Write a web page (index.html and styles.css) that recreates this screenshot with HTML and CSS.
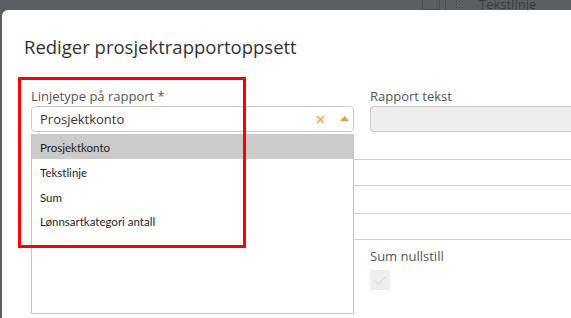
FILE: index.html
```html
<!DOCTYPE html>
<html lang="no">
<head>
    <meta charset="UTF-8">
    <title>Rediger prosjektrapportoppsett</title>
    <link rel="stylesheet" href="styles.css">
</head>
<body>
    <div class="backdrop">
        <div class="back-cell"></div>
        <div class="back-sep"></div>
        <div class="back-grip">
            <svg width="7" height="7" viewBox="0 0 7 7">
                <g fill="#45484b">
                    <rect x="0" y="0" width="1" height="1"/><rect x="3" y="0" width="1" height="1"/><rect x="6" y="0" width="1" height="1"/>
                    <rect x="0" y="3" width="1" height="1"/><rect x="3" y="3" width="1" height="1"/><rect x="6" y="3" width="1" height="1"/>
                    <rect x="0" y="6" width="1" height="1"/><rect x="3" y="6" width="1" height="1"/><rect x="6" y="6" width="1" height="1"/>
                </g>
            </svg>
        </div>
        <div class="back-text">Tekstlinje</div>
    </div>

    <div class="modal">
        <h1 class="modal-title">Rediger prosjektrapportoppsett</h1>

        <div class="form">
            <div class="row">
                <div class="field field-select">
                    <label class="field-label">Linjetype på rapport *</label>
                    <div class="select">
                        <span class="select-value">Prosjektkonto</span>
                        <span class="select-clear">
                            <svg width="9" height="9" viewBox="0 0 9 9">
                                <path d="M1 1 L8 8 M8 1 L1 8" stroke="#f39c3c" stroke-width="1.4" fill="none"/>
                            </svg>
                        </span>
                        <span class="select-arrow">
                            <svg width="9" height="5" viewBox="0 0 9 5">
                                <path d="M0 5 L4.5 0 L9 5 Z" fill="#f39c3c"/>
                            </svg>
                        </span>
                    </div>
                    <ul class="dropdown">
                        <li class="dropdown-item active">Prosjektkonto</li>
                        <li class="dropdown-item">Tekstlinje</li>
                        <li class="dropdown-item">Sum</li>
                        <li class="dropdown-item">Lønnsartkategori antall</li>
                    </ul>
                </div>
                <div class="field field-text">
                    <label class="field-label">Rapport tekst</label>
                    <div class="input disabled"></div>
                </div>
            </div>

            <div class="rules">
                <div class="rule r1"></div>
                <div class="rule r2"></div>
                <div class="rule r3"></div>
                <div class="rule r4"></div>
            </div>

            <div class="row">
                <div class="field field-select"></div>
                <div class="field field-text">
                    <label class="field-label">Sum nullstill</label>
                    <div class="checkbox">
                        <svg width="12" height="9" viewBox="0 0 12 9">
                            <path d="M1 4.5 L4.5 8 L11 1" stroke="#cfcfcf" stroke-width="1" fill="none"/>
                        </svg>
                    </div>
                </div>
            </div>
        </div>

        <div class="highlight"></div>
    </div>
</body>
</html>
```

FILE: styles.css
```css
body {
    margin: 0;
    padding: 0;
    background: #5b5f63;
    font-family: "Open Sans", sans-serif;
    overflow: hidden;
    height: 318px;
}

.backdrop {
    height: 10px;
    display: flex;
    align-items: flex-start;
    overflow: hidden;
    padding-left: 422px;
}

.back-cell {
    width: 18px;
    height: 10px;
    border: 1px solid #4b4f52;
    border-top: none;
    box-sizing: border-box;
}

.back-sep {
    width: 1px;
    height: 10px;
    background: #4b4f52;
    margin-left: 5px;
}

.back-grip {
    margin-left: 10px;
    margin-top: 1px;
    line-height: 0;
}

.back-text {
    margin-left: 16px;
    margin-top: -5px;
    font-size: 13px;
    line-height: 18px;
    color: #3a3d40;
}

.modal {
    position: relative;
    margin-left: 2px;
    background: #fff;
    border-top-left-radius: 6px;
    height: 308px;
    padding: 25px 0 0 22px;
    box-sizing: border-box;
}

.modal-title {
    margin: 0;
    font-size: 18.5px;
    line-height: 24px;
    font-weight: 400;
    color: #333;
}

.form {
    padding: 28px 0 0 7px;
}

.row {
    display: flex;
    gap: 16px;
}

.field {
    position: relative;
}

.field-select {
    width: 323px;
    flex-shrink: 0;
}

.field-text {
    flex: 1;
}

.field-label {
    display: block;
    font-size: 13px;
    line-height: 18px;
    color: #555;
    margin-bottom: 1px;
}

.select, .input {
    height: 26px;
    border: 1px solid #ccc;
    border-radius: 4px;
    box-sizing: border-box;
}

.select {
    display: flex;
    align-items: center;
    padding: 0 0 0 8px;
}

.select-value {
    flex: 1;
    font-size: 13px;
    color: #333;
}

.select-clear {
    line-height: 0;
    margin-right: 15px;
    margin-top: 1px;
}

.select-arrow {
    line-height: 0;
    margin-right: 4px;
    margin-top: -2px;
}

.input.disabled {
    background: #eee;
    border-right: none;
    border-radius: 4px 0 0 4px;
}

.dropdown {
    position: absolute;
    top: 47px;
    left: 0;
    width: 323px;
    height: 180px;
    margin: 0;
    padding: 0;
    list-style: none;
    background: #fff;
    border: 1px solid #c4c4c4;
    border-top: none;
    box-sizing: border-box;
    z-index: 2;
}

.dropdown-item {
    height: 24.5px;
    line-height: 28px;
    padding-left: 8px;
    font-family: Lato, sans-serif;
    font-size: 11.5px;
    color: #1e1e1e;
}

.dropdown-item.active {
    background: #cbcbcb;
    height: 25px;
}

.rules {
    margin-top: 27px;
}

.rule {
    border-top: 1px solid #cfcfcf;
}

.r1 { height: 25px; }
.r2 { height: 27px; }
.r3 { height: 25px; }
.r4 { height: 7px; }

.checkbox {
    width: 20px;
    height: 20px;
    margin-top: 5px;
    background: #eee;
    border-radius: 2px;
    display: flex;
    align-items: center;
    justify-content: center;
}

.highlight {
    position: absolute;
    left: 16px;
    top: 67px;
    width: 228px;
    height: 171px;
    border: 3px solid #ff0000;
    box-sizing: border-box;
    z-index: 3;
}
```
